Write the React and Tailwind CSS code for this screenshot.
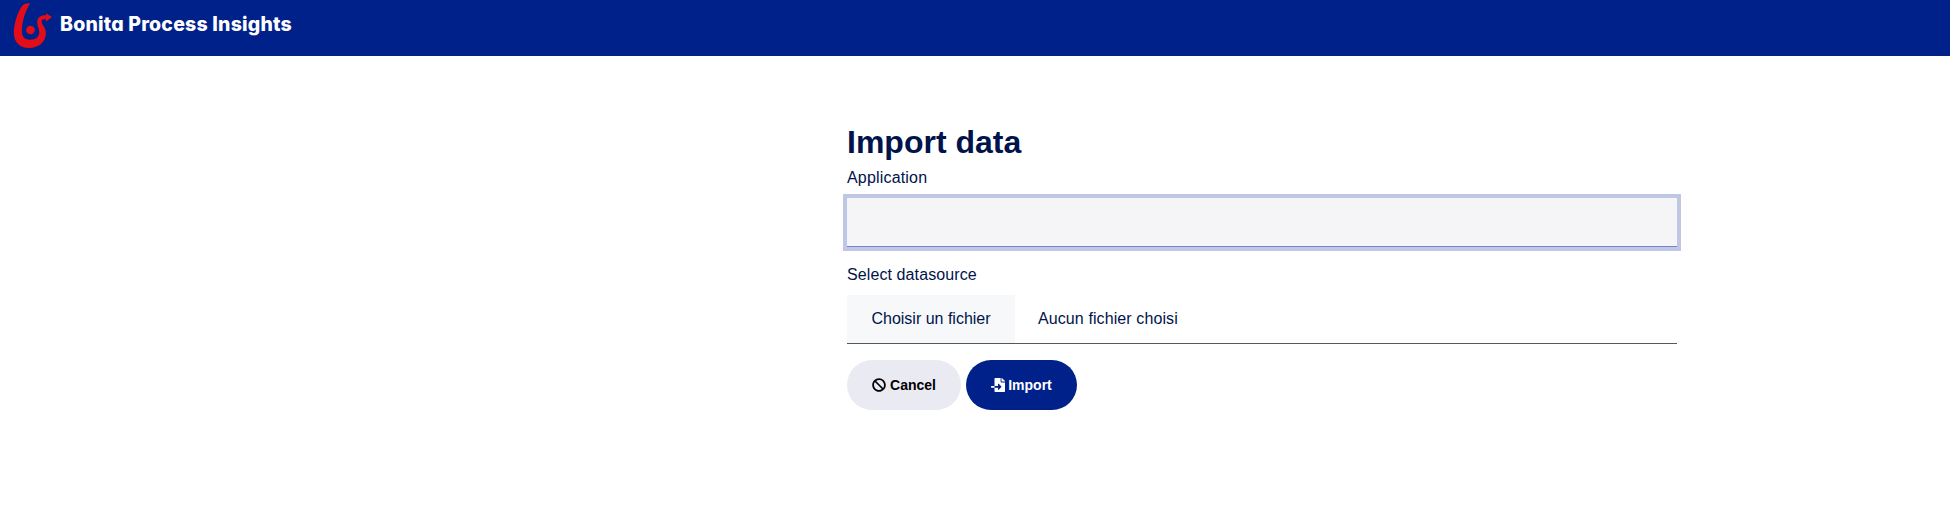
import { FaBan, FaFileImport } from "react-icons/fa";

function Logo() {
  return (
    <svg viewBox="0 0 60 56" className="h-14 w-[60px] shrink-0" aria-hidden="true">
      <path
        d="M30.2 3.2C27 2.900 24.500 3.500 22.500 5.500C18 10.500 13.800 24 13.800 32.500C13.800 42.500 20 48 29 48C39 48 45.900 41.500 45.900 33C45.900 27.500 41.700 25 41.700 21.500C41.700 19.700 43 19.100 44.500 19.200L46 19.300V21.500L52 17L46 13.300V15.300C41 14.900 37 17.500 37.200 22.500C37.400 26.500 39.200 28.500 39.200 32C39.200 37.500 35.500 39.700 29.800 39.700C24.500 39.700 21.900 36.500 21.900 31C21.900 22 25 12 30.200 3.200Z"
        fill="#e20d18"
      />
      <circle cx="30.500" cy="30" r="4.300" fill="#e20d18" />
    </svg>
  );
}

export default function App() {
  return (
    <div className="min-h-screen bg-white font-['Liberation_Sans',sans-serif] text-[#00134a]">
      <header className="flex h-14 items-start bg-[#00208a]">
        <Logo />
        <span className="pt-[9px] font-['Inter',sans-serif] text-[19.500px] leading-[30px] font-extrabold tracking-[0.2px] whitespace-nowrap text-white [font-feature-settings:'cv11','ss03']">
          Bonita Process Insights
        </span>
      </header>

      <main className="ml-[847px] w-[830px] pt-[67px]">
        <h1 className="text-[32px] leading-[38px] font-bold">Import data</h1>
        <form>
          <label htmlFor="application" className="mt-[5px] block text-base leading-6 tracking-[0.18px]">
            Application
          </label>
          <input
            id="application"
            type="text"
            className="mt-[8px] block h-[49px] w-full border-b border-[#7385cc] bg-[#f5f5f8] px-6 ring-4 ring-[#bfc7e4] outline-none"
          />
          <label className="mt-[16px] block text-base leading-6 tracking-[0.1px]">Select datasource</label>
          <div className="mt-[8px] flex h-[49px] border-b border-[#58585b]">
            <span className="flex w-[168px] items-center justify-center rounded-tl-[2px] bg-[#f7f8fa] pb-px">
              Choisir un fichier
            </span>
            <span className="flex items-center pb-px pl-[23px] tracking-[0.1px]">Aucun fichier choisi</span>
          </div>
          <div className="mt-4 flex gap-[5px] text-sm font-bold">
            <button
              type="button"
              className="flex h-[50px] w-[114px] items-center justify-center gap-1 rounded-full bg-[#eaebf2] text-black"
            >
              <FaBan className="size-3.5" />
              Cancel
            </button>
            <button
              type="button"
              className="flex h-[50px] w-[111px] items-center justify-center gap-[3px] rounded-full bg-[#00208a] text-white"
            >
              <FaFileImport className="size-3.5" />
              Import
            </button>
          </div>
        </form>
      </main>
    </div>
  );
}
